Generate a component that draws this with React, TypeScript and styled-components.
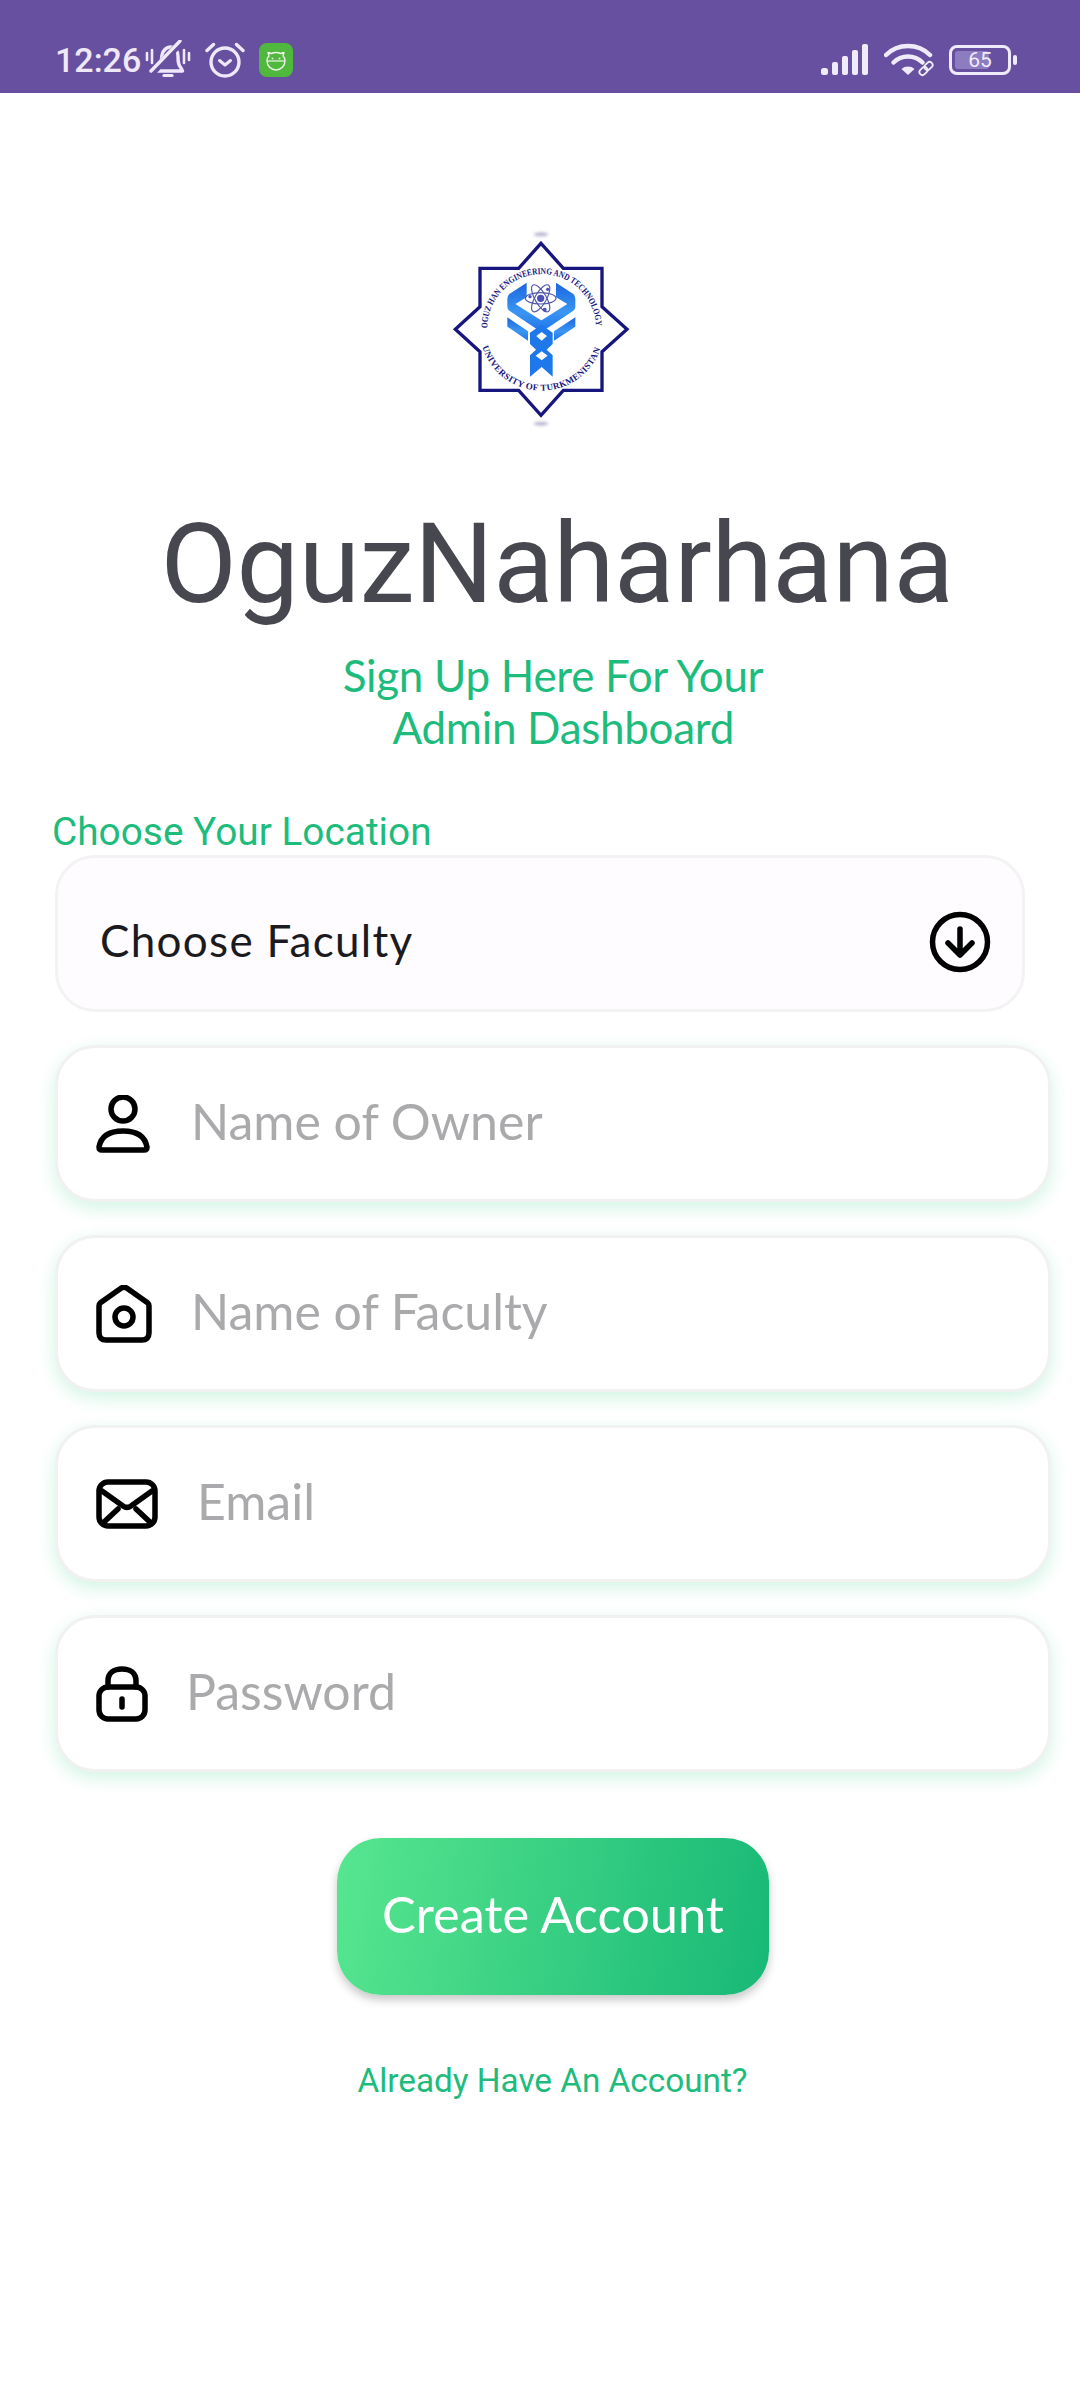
import React from 'react';
import styled, { createGlobalStyle } from 'styled-components';

const GREEN = '#1ebc7c';

const GlobalStyle = createGlobalStyle`
  html, body {
    margin: 0;
    padding: 0;
    background: #ffffff;
  }
  * {
    box-sizing: border-box;
  }
`;

function BellOffIcon() {
  return (
    <StatusSvg width="46" height="40" viewBox="0 0 46 40">
      <path d="M14 28c3-3 2-8 3-13 1-5 5-8 8-8 5 0 8 4 8 9 0 5 0 9 3 12l1.500 3H11z" fill="none" stroke="#eee8f8" strokeWidth="3.400" strokeLinejoin="round" />
      <path d="M19 35.500h8" stroke="#eee8f8" strokeWidth="3.200" strokeLinecap="round" />
      <path d="M2 13v7M7 10v13M39 10v13M44 13v7" stroke="#eee8f8" strokeWidth="2.600" strokeLinecap="round" />
      <path d="M7 33 36 2" stroke="#67509f" strokeWidth="7" />
      <path d="M6 31 35 1" stroke="#eee8f8" strokeWidth="3.400" strokeLinecap="round" />
    </StatusSvg>
  );
}

function AlarmIcon() {
  return (
    <StatusSvg width="40" height="36" viewBox="0 0 40 36">
      <circle cx="20" cy="20" r="14" fill="none" stroke="#eee8f8" strokeWidth="3.400" />
      <path d="M14.500 18.500 20 23l5.500-4.500" fill="none" stroke="#eee8f8" strokeWidth="3" strokeLinecap="round" strokeLinejoin="round" />
      <path d="M2 8.500 8.500 2.500M38 8.500 31.500 2.500" stroke="#eee8f8" strokeWidth="3.400" strokeLinecap="round" />
    </StatusSvg>
  );
}

function AppBadge() {
  return (
    <Badge>
      <svg width="24" height="24" viewBox="0 0 24 24">
        <path d="M5 8 4 4.500 7.500 5.500c3-1.400 6-1.400 9 0L20 4.500 19 8c1.500 1.500 2 3 2 4.500C21 18 17 22 12 22s-9-4-9-9.500C3 11 3.500 9.500 5 8z" fill="none" stroke="#eef6ea" strokeWidth="1.400" strokeLinejoin="round" />
        <path d="M3.500 13h17" stroke="#eef6ea" strokeWidth="1.200" />
        <circle cx="8.500" cy="10.500" r="1" fill="#eef6ea" />
        <circle cx="15.500" cy="10.500" r="1" fill="#eef6ea" />
      </svg>
    </Badge>
  );
}

function SignalIcon() {
  return (
    <StatusSvg width="48" height="32" viewBox="0 0 48 32">
      <rect x="0" y="24" width="7" height="7" rx="2.500" fill="#f0ebfa" />
      <rect x="11" y="18" width="6" height="13" rx="2" fill="#f0ebfa" />
      <rect x="21" y="12" width="6" height="19" rx="2" fill="#f0ebfa" />
      <rect x="31" y="6" width="6" height="25" rx="2" fill="#f0ebfa" />
      <rect x="41" y="0" width="6" height="31" rx="2" fill="#f0ebfa" />
    </StatusSvg>
  );
}

function WifiIcon() {
  return (
    <StatusSvg width="50" height="36" viewBox="0 0 50 36">
      <path d="M2 13c12-12 32-12 44 0" fill="none" stroke="#f0ebfa" strokeWidth="4.500" strokeLinecap="round" />
      <path d="M9.500 20.500c8-8 21-8 29 0" fill="none" stroke="#f0ebfa" strokeWidth="4.500" strokeLinecap="round" />
      <path d="M24 33l-6.500-6c3.500-3.300 9.500-3.300 13 0z" fill="#f0ebfa" />
      <g fill="none" stroke="#f0ebfa" strokeWidth="1.800">
        <rect x="35" y="26" width="9" height="6" rx="3" transform="rotate(-45 39.500 29)" />
        <rect x="40" y="21" width="9" height="6" rx="3" transform="rotate(-45 44.500 24)" />
      </g>
    </StatusSvg>
  );
}

function BatteryIcon() {
  return (
    <BatteryWrap>
      <BatteryBody>
        <BatteryFill />
        <BatteryText>65</BatteryText>
      </BatteryBody>
      <BatteryNub />
    </BatteryWrap>
  );
}

function CollegeLogo() {
  return (
    <svg width="280" height="230" viewBox="0 0 840 690">
      <defs>
        <path id="arcTop" d="M262 355a163 163 0 0 1 326 0" />
        <path id="arcBottom" d="M247 410a186 186 0 0 0 356 0" />
        <linearGradient id="ribbon" x1="0" y1="0" x2="0" y2="1">
          <stop offset="0" stopColor="#1a66e0" />
          <stop offset="0.6" stopColor="#3a96f2" />
          <stop offset="1" stopColor="#1f74ea" />
        </linearGradient>
        <filter id="soft" x="-50%" y="-200%" width="200%" height="500%">
          <feGaussianBlur stdDeviation="5" />
        </filter>
      </defs>
      <ellipse cx="423" cy="73" rx="22" ry="6" fill="#b9b7d0" filter="url(#soft)" />
      <ellipse cx="423" cy="641" rx="22" ry="6" fill="#b9b7d0" filter="url(#soft)" />
      <path
        d="M423 100 490 175H606V290L681 358 606 425V541H490L423 616 356 541H240V425L166 358 240 290V175H356Z"
        fill="#fff"
        stroke="#17157e"
        strokeWidth="10"
      />
      <path d="M380 218v44l-34 20 82 52-8 30-92-62q-6-4-6-12v-24q0-8 6-14z" fill="url(#ribbon)" />
      <path d="M468 218v44l34 20-82 52 8 30 92-62q6-4 6-12v-24q0-8-6-14z" fill="url(#ribbon)" />
      <path d="M322 322l62 42v28l-62-42zM526 322l-64 42v28l64-42z" fill="url(#ribbon)" />
      <path d="M390 368l34-24 34 24v34l-18 17 18 17v64l-33-29-35 29v-64l18-17-18-17z" fill="#1f78ea" />
      <path d="M425 366l16 12-16 14-16-14zM425 424l18 13-18 14-18-14z" fill="#fff" />
      <g fill="none" stroke="#5058a8" strokeWidth="3.500">
        <ellipse cx="422" cy="265" rx="46" ry="17" />
        <ellipse cx="422" cy="265" rx="46" ry="17" transform="rotate(60 422 265)" />
        <ellipse cx="422" cy="265" rx="46" ry="17" transform="rotate(-60 422 265)" />
      </g>
      <circle cx="422" cy="265" r="11" fill="#4a50b8" />
      <circle cx="390" cy="260" r="5" fill="#4a50b8" />
      <circle cx="443" cy="238" r="5" fill="#4a50b8" />
      <circle cx="434" cy="299" r="6" fill="#4a50b8" />
      <LogoText fontSize="27">
        <textPath href="#arcTop" textLength="505" lengthAdjust="spacingAndGlyphs">OGUZ HAN ENGINEERING AND TECHNOLOGY</textPath>
      </LogoText>
      <LogoText fontSize="27">
        <textPath href="#arcBottom" textLength="468" lengthAdjust="spacing">UNIVERSITY OF TURKMENISTAN</textPath>
      </LogoText>
    </svg>
  );
}

function PersonIcon() {
  return (
    <InputSvg width="54" height="58" viewBox="0 0 54 58">
      <circle cx="27" cy="14" r="12" />
      <path d="M3 52c2-11 11-16 24-16s22 5 24 16c0 2-1 3-3 3H6c-2 0-3-1-3-3z" />
    </InputSvg>
  );
}

function HomeIcon() {
  return (
    <InputSvg width="56" height="58" viewBox="0 0 56 58">
      <path d="M3 21c0-1.500.7-2.700 1.800-3.600L25 3.300c1.800-1.300 4.200-1.300 6 0l20.200 14.100c1.100.9 1.800 2.100 1.800 3.600v27c0 4.500-2.500 7-7 7H10c-4.500 0-7-2.500-7-7z" />
      <circle cx="28" cy="32" r="9" />
    </InputSvg>
  );
}

function MailIcon() {
  return (
    <InputSvg width="62" height="50" viewBox="0 0 62 50">
      <rect x="3" y="3" width="56" height="44" rx="9" />
      <path d="M6 12 27 27c2.500 1.700 5.500 1.700 8 0L56 12" />
      <path d="M7 44 22 30M55 44 40 30" />
    </InputSvg>
  );
}

function LockIcon() {
  return (
    <InputSvg width="52" height="56" viewBox="0 0 52 56">
      <rect x="3" y="21" width="46" height="32" rx="9" />
      <path d="M12 21v-6c0-8 6-12 14-12s14 4 14 12v6" />
      <path d="M26 33v8" />
    </InputSvg>
  );
}

function ArrowDownCircle() {
  return (
    <InputSvg width="62" height="62" viewBox="0 0 62 62">
      <circle cx="31" cy="31" r="27.500" />
      <path d="M31 18v25M19 32l12 12 12-12" />
    </InputSvg>
  );
}

export default function App() {
  return (
    <Screen>
      <GlobalStyle />
      <StatusBar>
        <StatusTime>12:26</StatusTime>
        <StatusLeft>
          <BellOffIcon />
          <AlarmIcon />
          <AppBadge />
        </StatusLeft>
        <StatusRight>
          <SignalIcon />
          <WifiIcon />
          <BatteryIcon />
        </StatusRight>
      </StatusBar>

      <Content>
        <LogoBox>
          <CollegeLogo />
        </LogoBox>
        <Title>OguzNaharhana</Title>
        <Subtitle>
          Sign Up Here For Your
          <br />
          &nbsp;&nbsp;Admin Dashboard
        </Subtitle>

        <Form>
          <FieldLabel>Choose Your Location</FieldLabel>
          <SelectBox>
            <SelectText>Choose Faculty</SelectText>
            <ArrowDownCircle />
          </SelectBox>
          <InputRow>
            <IconSlot><PersonIcon /></IconSlot>
            <Placeholder $left={41}>Name of Owner</Placeholder>
          </InputRow>
          <InputRow>
            <IconSlot><HomeIcon /></IconSlot>
            <Placeholder $left={39}>Name of Faculty</Placeholder>
          </InputRow>
          <InputRow>
            <IconSlot><MailIcon /></IconSlot>
            <Placeholder $left={39}>Email</Placeholder>
          </InputRow>
          <InputRow>
            <IconSlot><LockIcon /></IconSlot>
            <Placeholder $left={38}>Password</Placeholder>
          </InputRow>
        </Form>

        <CreateButton><ButtonLabel>Create Account</ButtonLabel></CreateButton>
        <LoginLink>Already Have An Account?</LoginLink>
      </Content>
    </Screen>
  );
}

const Screen = styled.div`
  width: 1080px;
  min-height: 2400px;
  background: #ffffff;
  display: flex;
  flex-direction: column;
`;

const StatusBar = styled.div`
  height: 93px;
  background: #67509f;
  display: flex;
  align-items: center;
  padding: 27px 63px 0 55px;
  color: #eee8f8;
`;

const StatusTime = styled.span`
  font-family: Roboto, sans-serif;
  font-size: 34px;
  font-weight: 500;
`;

const StatusLeft = styled.div`
  display: flex;
  align-items: center;
  gap: 14px;
  margin-left: 4px;
`;

const StatusRight = styled.div`
  display: flex;
  align-items: center;
  gap: 15px;
  margin-left: auto;
`;

const StatusSvg = styled.svg`
  display: block;
  flex: none;
`;

const Badge = styled.div`
  width: 34px;
  height: 34px;
  border-radius: 8px;
  background: #50b83c;
  display: flex;
  align-items: center;
  justify-content: center;
`;

const BatteryWrap = styled.div`
  display: flex;
  align-items: center;
  gap: 2px;
`;

const BatteryBody = styled.div`
  position: relative;
  width: 62px;
  height: 30px;
  border: 3.500px solid #f0ebfa;
  border-radius: 8px;
  display: flex;
  align-items: center;
  justify-content: center;
`;

const BatteryFill = styled.div`
  position: absolute;
  left: 3px;
  top: 3px;
  bottom: 3px;
  width: 34px;
  border-radius: 3px;
  background: #8e7cc0;
`;

const BatteryText = styled.span`
  position: relative;
  font-family: Roboto, sans-serif;
  font-size: 21px;
  font-weight: 400;
  color: #f0ebfa;
`;

const BatteryNub = styled.div`
  width: 4px;
  height: 10px;
  border-radius: 2px;
  background: #f0ebfa;
`;

const Content = styled.div`
  display: flex;
  flex-direction: column;
  align-items: center;
  padding-top: 117px;
`;

const LogoBox = styled.div`
  height: 230px;
  display: flex;
  justify-content: center;
`;

const LogoText = styled.text`
  font-family: "Liberation Serif", serif;
  font-weight: 700;
  fill: #17157e;
`;

const Title = styled.h1`
  margin: 64px 0 0 34px;
  font-family: Roboto, sans-serif;
  font-size: 111px;
  font-weight: 400;
  line-height: 120px;
  letter-spacing: -0.3px;
  color: #47474f;
  text-align: center;
`;

const Subtitle = styled.div`
  margin: 25px 0 0 26px;
  font-family: Lato, sans-serif;
  font-size: 44px;
  line-height: 52px;
  letter-spacing: -0.3px;
  color: ${GREEN};
  text-align: center;
`;

const Form = styled.div`
  align-self: stretch;
  display: flex;
  flex-direction: column;
  align-items: flex-start;
  padding: 0 29px 0 52px;
  margin-top: 56px;
`;

const FieldLabel = styled.div`
  font-family: Roboto, sans-serif;
  font-size: 38.800px;
  line-height: 46px;
  color: ${GREEN};
`;

const SelectBox = styled.div`
  width: 970px;
  height: 157px;
  margin: 0 0 0 3px;
  padding: 16px 31px 0 42px;
  border: 3px solid #f3f3f4;
  border-radius: 40px;
  background: #fefcfe;
  display: flex;
  align-items: center;
  justify-content: space-between;
`;

const SelectText = styled.span`
  font-family: Lato, sans-serif;
  font-size: 44px;
  letter-spacing: 1.300px;
  color: #1b1b1f;
  margin-top: -3px;
`;

const InputRow = styled.div`
  width: 996px;
  height: 157px;
  margin: 33px 0 0 3px;
  padding-left: 38px;
  border: 3px solid #f1f1f1;
  border-radius: 40px;
  background: #ffffff;
  box-shadow: 0 6px 18px rgba(30, 200, 120, 0.2);
  display: flex;
  align-items: center;
`;

const IconSlot = styled.div`
  display: flex;
  align-items: center;
`;

const InputSvg = styled.svg`
  display: block;
  flex: none;
  fill: none;
  stroke: #000000;
  stroke-width: 5.500;
  stroke-linecap: round;
  stroke-linejoin: round;
`;

const Placeholder = styled.span<{ $left: number }>`
  margin: -5px 0 0 ${(p) => p.$left}px;
  font-family: Lato, sans-serif;
  font-size: 50px;
  color: #aaaaad;
`;

const CreateButton = styled.div`
  width: 432px;
  height: 157px;
  margin: 66px 0 0 26px;
  border-radius: 44px;
  background: linear-gradient(100deg, #58e68f 0%, #17b876 100%);
  box-shadow: 0 5px 10px rgba(0, 0, 0, 0.22);
  display: flex;
  align-items: center;
  justify-content: center;
`;

const ButtonLabel = styled.span`
  margin-top: -6px;
  font-family: Lato, sans-serif;
  font-size: 50.500px;
  color: #ffffff;
`;

const LoginLink = styled.div`
  margin: 66px 0 0 25px;
  font-family: Roboto, sans-serif;
  font-size: 33.300px;
  line-height: 40px;
  color: ${GREEN};
`;
